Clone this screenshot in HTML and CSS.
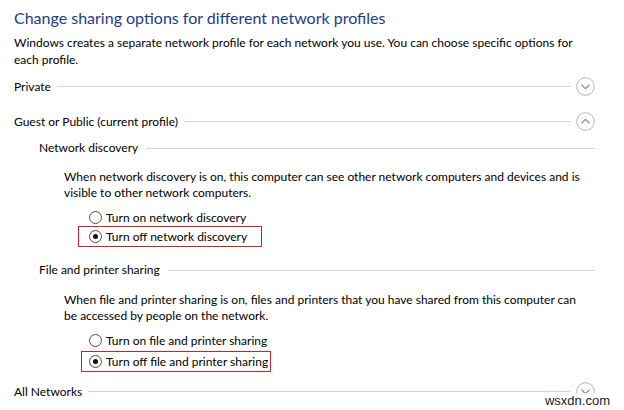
FILE: index.html
```html
<!DOCTYPE html>
<html lang="en">
<head>
	<meta charset="UTF-8">
	<title>Advanced sharing settings</title>
	<link rel="stylesheet" href="styles.css">
</head>
<body>
<div class="page">
	<h1 class="title">Change sharing options for different network profiles</h1>
	<p class="intro">Windows creates a separate network profile for each network you use. You can choose specific options for each profile.</p>

	<div class="profile profile-private">
		<span class="label">Private</span>
		<span class="rule"></span>
		<svg class="toggle" width="19" height="19" viewBox="0 0 19 19"><circle cx="9.5" cy="9.5" r="8.8" fill="none" stroke="#b4b4b4" stroke-width="1"/><path d="M5.5 7.8 L9.5 11.6 L13.5 7.8" fill="none" stroke="#8a8a8a" stroke-width="1.2"/></svg>
	</div>

	<div class="profile profile-guest">
		<span class="label">Guest or Public (current profile)</span>
		<span class="rule"></span>
		<svg class="toggle" width="19" height="19" viewBox="0 0 19 19"><circle cx="9.5" cy="9.5" r="8.8" fill="none" stroke="#b4b4b4" stroke-width="1"/><path d="M5.5 11.2 L9.5 7.4 L13.5 11.2" fill="none" stroke="#8a8a8a" stroke-width="1.2"/></svg>
	</div>

	<div class="group">
		<div class="group-head head-discovery">
			<span class="label">Network discovery</span>
			<span class="rule"></span>
		</div>
		<p class="note note-discovery">When network discovery is on, this computer can see other network computers and devices and is visible to other network computers.</p>
		<div class="option option-first"><span class="radio"></span>Turn on network discovery</div>
		<div class="option option-picked box-discovery"><span class="radio checked"></span>Turn off network discovery</div>
	</div>

	<div class="group">
		<div class="group-head head-sharing">
			<span class="label">File and printer sharing</span>
			<span class="rule"></span>
		</div>
		<p class="note note-sharing">When file and printer sharing is on, files and printers that you have shared from this computer can be accessed by people on the network.</p>
		<div class="option option-first"><span class="radio"></span>Turn on file and printer sharing</div>
		<div class="option option-picked box-sharing"><span class="radio checked"></span>Turn off file and printer sharing</div>
	</div>

	<div class="profile profile-all">
		<span class="label">All Networks</span>
		<span class="rule"></span>
		<svg class="toggle" width="19" height="19" viewBox="0 0 19 19"><circle cx="9.5" cy="9.5" r="8.8" fill="none" stroke="#b4b4b4" stroke-width="1"/><path d="M5.5 7.8 L9.5 11.6 L13.5 7.8" fill="none" stroke="#8a8a8a" stroke-width="1.2"/></svg>
	</div>
</div>
<div class="mark">wsxdn.com</div>
</body>
</html>
```

FILE: styles.css
```css
*{padding:0; margin:0;}
html, body{background:#fff; height:100%; overflow:hidden;}
body{font-family:Lato, "Liberation Sans", sans-serif; font-size:12px; color:#000; position:relative;}

.page{padding:0 29px 0 14px;}

.title{font-size:16px; font-weight:normal; color:#1e3a8c; line-height:24px; margin-top:6px;}
.intro{line-height:17px; margin-top:4px;}

.profile{display:flex; align-items:center; height:22px;}
.profile .rule{margin:0 5px 0 6px;}
.profile-private{margin-top:7px;}
.profile-guest{margin-top:13px;}
.profile-all{margin-top:8px;}

.label{white-space:nowrap;}
.rule{flex:1; height:1px; background:#d4d4d4; margin-top:2px;}

.group{padding-left:25px;}
.group-head{display:flex; align-items:center; height:18px;}
.group-head .rule{margin-left:8px;}
.head-discovery{margin-top:6px;}
.head-sharing{margin-top:13px;}

.note{padding:0 12px 0 25px; line-height:16px; margin-top:13px;}
.note-sharing{margin-top:14px;}

.option{display:flex; align-items:center; height:18px; margin-left:50px;}
.option-first{margin-top:7px;}
.option-picked{display:inline-flex; height:19px; border:1px solid #c1272d; padding:0 14px 0 10px; margin-left:39px;}
.box-sharing{margin-left:42px; margin-top:2px; padding-left:7px; padding-right:2px;}

.radio{width:11px; height:11px; border:1px solid #4d4d4d; border-radius:50%; margin-right:4px; position:relative; background:#fff;}
.radio.checked::after{content:""; position:absolute; left:3px; top:3px; width:5px; height:5px; border-radius:50%; background:#111;}

.mark{position:absolute; right:12px; bottom:2px; font-family:"Liberation Sans", sans-serif; font-size:13px; color:#222; background:rgba(255,255,255,0.7); padding:0 2px;}
```
